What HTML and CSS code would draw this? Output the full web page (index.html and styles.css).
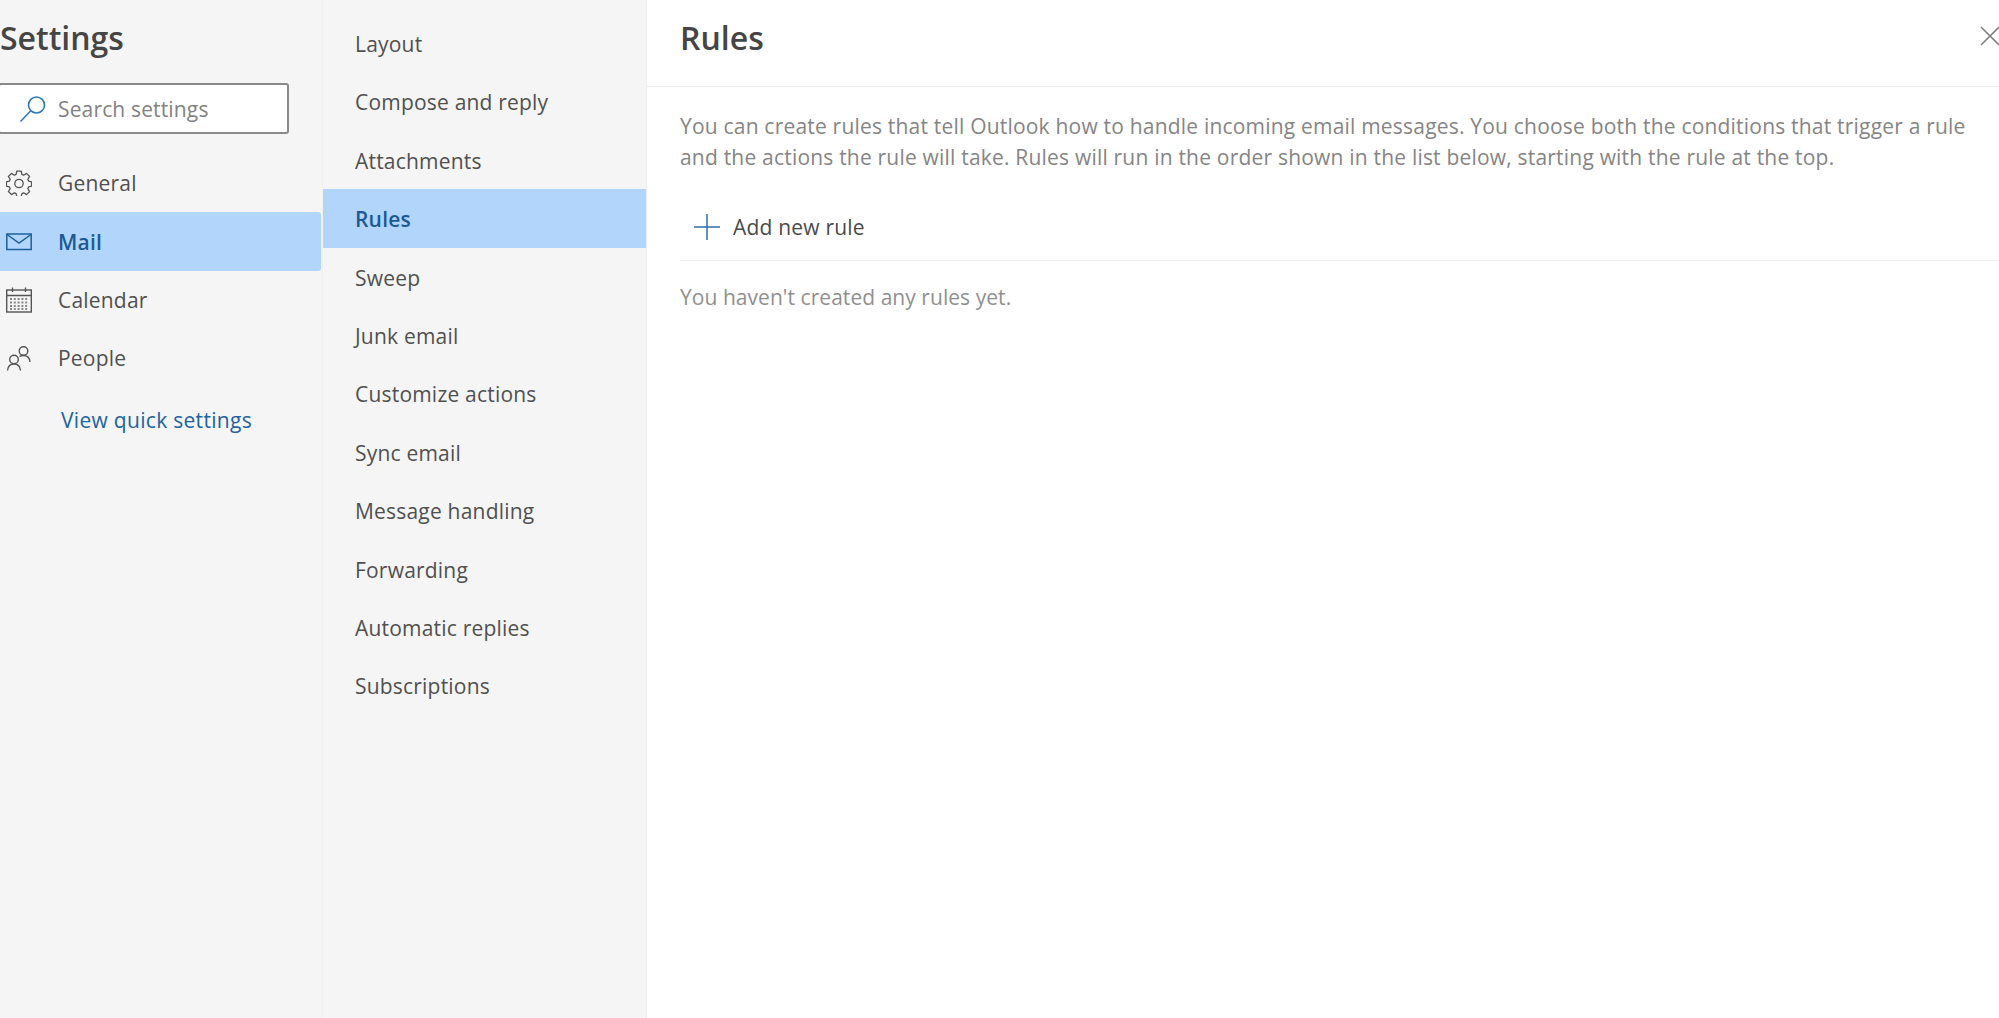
FILE: index.html
```html
<!DOCTYPE html>
<html lang="en">
<head>
<meta charset="utf-8">
<title>Settings</title>
<link rel="stylesheet" href="styles.css">
</head>
<body>
<div class="app">
  <aside class="side">
    <h1 class="side-title">Settings</h1>
    <div class="search">
      <svg class="search-icon" viewBox="0 0 28 28" width="28" height="28" fill="none" stroke="#2f78b7" stroke-width="1.6"><circle cx="17.5" cy="10" r="8"/><path d="M11.8 15.8 1.5 26.5"/></svg>
      <span class="search-text">Search settings</span>
    </div>
    <nav class="side-nav">
      <div class="side-item">
        <svg class="nav-icon" viewBox="0 0 26 26" width="26" height="26" fill="none" stroke="#555" stroke-width="1.3" stroke-linejoin="round"><path d="M10.8 1.2h4.4l.7 3.2 1.8.8 2.8-1.8 3.1 3.1-1.8 2.8.8 1.8 3 .7v4.4l-3 .7-.8 1.8 1.8 2.8-3.1 3.1-2.8-1.8-1.800.8-.7 3h-4.400l-.7-3-1.800-.8-2.800 1.800-3.100-3.100 1.800-2.800-.8-1.800-3-.7v-4.400l3-.7.8-1.800-1.800-2.800 3.100-3.100 2.800 1.800 1.800-.8z"/><circle cx="13" cy="13.500" r="4.200"/></svg>
        <span>General</span>
      </div>
      <div class="side-item is-active">
        <svg class="nav-icon" viewBox="0 0 26 26" width="26" height="26" fill="none" stroke="#1f5f99" stroke-width="1.500"><rect x="0.800" y="5" width="24.400" height="15.500"/><path d="M1 5.500 13 14 25 5.500"/></svg>
        <span>Mail</span>
      </div>
      <div class="side-item">
        <svg class="nav-icon" viewBox="0 0 26 26" width="26" height="26" fill="none" stroke="#555" stroke-width="1.400"><rect x="0.700" y="3" width="24.600" height="22"/><path d="M1 8.500h24M6.500 0.500v4.500M19.500 0.500v4.500"/><path d="M4 12h18M4 15.500h18M4 19h18M4 22h18" stroke-width="1.800" stroke-dasharray="2 1.800" stroke="#888"/></svg>
        <span>Calendar</span>
      </div>
      <div class="side-item">
        <svg class="nav-icon" viewBox="0 0 26 26" width="26" height="26" fill="none" stroke="#555" stroke-width="1.400"><circle cx="8" cy="14.500" r="4.300"/><path d="M1.500 25.500c.4-3.800 2.900-6.500 6.500-6.500s6.100 2.700 6.500 6.500"/><circle cx="17.500" cy="6" r="4.300"/><path d="M13.500 11.500c1.100-.7 2.500-1 4-1 3.600 0 6.100 2.700 6.500 6.500"/></svg>
        <span>People</span>
      </div>
    </nav>
    <a class="quick-link">View quick settings</a>
  </aside>
  <nav class="sub">
    <div class="sub-item">Layout</div>
    <div class="sub-item">Compose and reply</div>
    <div class="sub-item">Attachments</div>
    <div class="sub-item is-active">Rules</div>
    <div class="sub-item">Sweep</div>
    <div class="sub-item">Junk email</div>
    <div class="sub-item">Customize actions</div>
    <div class="sub-item">Sync email</div>
    <div class="sub-item">Message handling</div>
    <div class="sub-item">Forwarding</div>
    <div class="sub-item">Automatic replies</div>
    <div class="sub-item">Subscriptions</div>
  </nav>
  <main class="main">
    <header class="main-head">
      <h2 class="main-title">Rules</h2>
      <svg class="close" viewBox="0 0 20 20" width="20" height="20" fill="none" stroke="#808080" stroke-width="1.600"><path d="M1 1 19 19M19 1 1 19"/></svg>
    </header>
    <div class="main-body">
      <p class="intro">You can create rules that tell Outlook how to handle incoming email messages. You choose both the conditions that trigger a rule and the actions the rule will take. Rules will run in the order shown in the list below, starting with the rule at the top.</p>
      <div class="add-row">
        <svg class="plus" viewBox="0 0 26 26" width="26" height="26" fill="none" stroke="#2f6ea8" stroke-width="1.500"><path d="M0 13h26M13 0v26"/></svg>
        <span>Add new rule</span>
      </div>
      <p class="empty">You haven't created any rules yet.</p>
    </div>
  </main>
</div>
</body>
</html>
```

FILE: styles.css
```css
* { box-sizing: border-box; }
html, body { margin: 0; height: 100%; overflow: hidden; }
body { font-family: "Open Sans", "Noto Sans", sans-serif; font-size: 21px; letter-spacing: 0.2px; color: #505050; background: #fff; }
.app { display: flex; height: 1018px; }
.side { width: 322px; flex: none; background: #f5f5f5; }
.side-title { margin: 0; padding-top: 13px; height: 83px; font-size: 32px; line-height: 50px; font-weight: 600; letter-spacing: 0; color: #454545; }
.search { display: flex; align-items: center; width: 291px; height: 51px; margin-left: -2px; background: #fff; border: 2px solid #8a8a8a; border-radius: 3px; padding-left: 19px; }
.search-icon { flex: none; }
.search-text { margin-left: 11px; letter-spacing: 0.15px; color: #828282; }
.side-nav { padding-top: 20px; }
.side-item { display: flex; align-items: center; height: 58.400px; padding-left: 6px; }
.side-item span { margin-left: 26px; }
.nav-icon { flex: none; }
.side-item.is-active { margin-right: 1px; background: #b2d5fb; color: #1b5a96; font-weight: 600; border-radius: 0 3px 3px 0; }
.quick-link { display: block; margin: 16px 0 0 61px; line-height: 32px; letter-spacing: 0.3px; color: #20639f; }
.sub { width: 325px; flex: none; background: #f5f5f5; padding-top: 14px; border-left: 1px solid #f0f0f0; border-right: 1px solid #ececec; }
.sub-item { height: 58.400px; line-height: 60px; padding-left: 32px; }
.sub-item.is-active { background: #b2d5fb; color: #1b5a96; font-weight: 600; }
.main { flex: 1; min-width: 0; }
.main-head { display: flex; align-items: center; justify-content: space-between; height: 87px; padding-left: 33px; border-bottom: 1px solid #ebebeb; }
.main-title { margin: 0 0 11px; font-size: 32px; line-height: 50px; font-weight: 600; letter-spacing: 0; color: #454545; }
.close { flex: none; margin: 0 -1px 15px 0; }
.main-body { padding: 24px 0 0 33px; }
.intro { margin: 0; line-height: 31px; color: #858585; }
.add-row { display: flex; align-items: center; height: 67px; margin-top: 21px; padding-left: 14px; border-bottom: 1px solid #f0f0f0; color: #4a4a4a; }
.plus { flex: none; }
.add-row span { margin-left: 13px; }
.empty { margin: 20px 0 0; line-height: 32px; letter-spacing: 0.05px; color: #909090; }
```
